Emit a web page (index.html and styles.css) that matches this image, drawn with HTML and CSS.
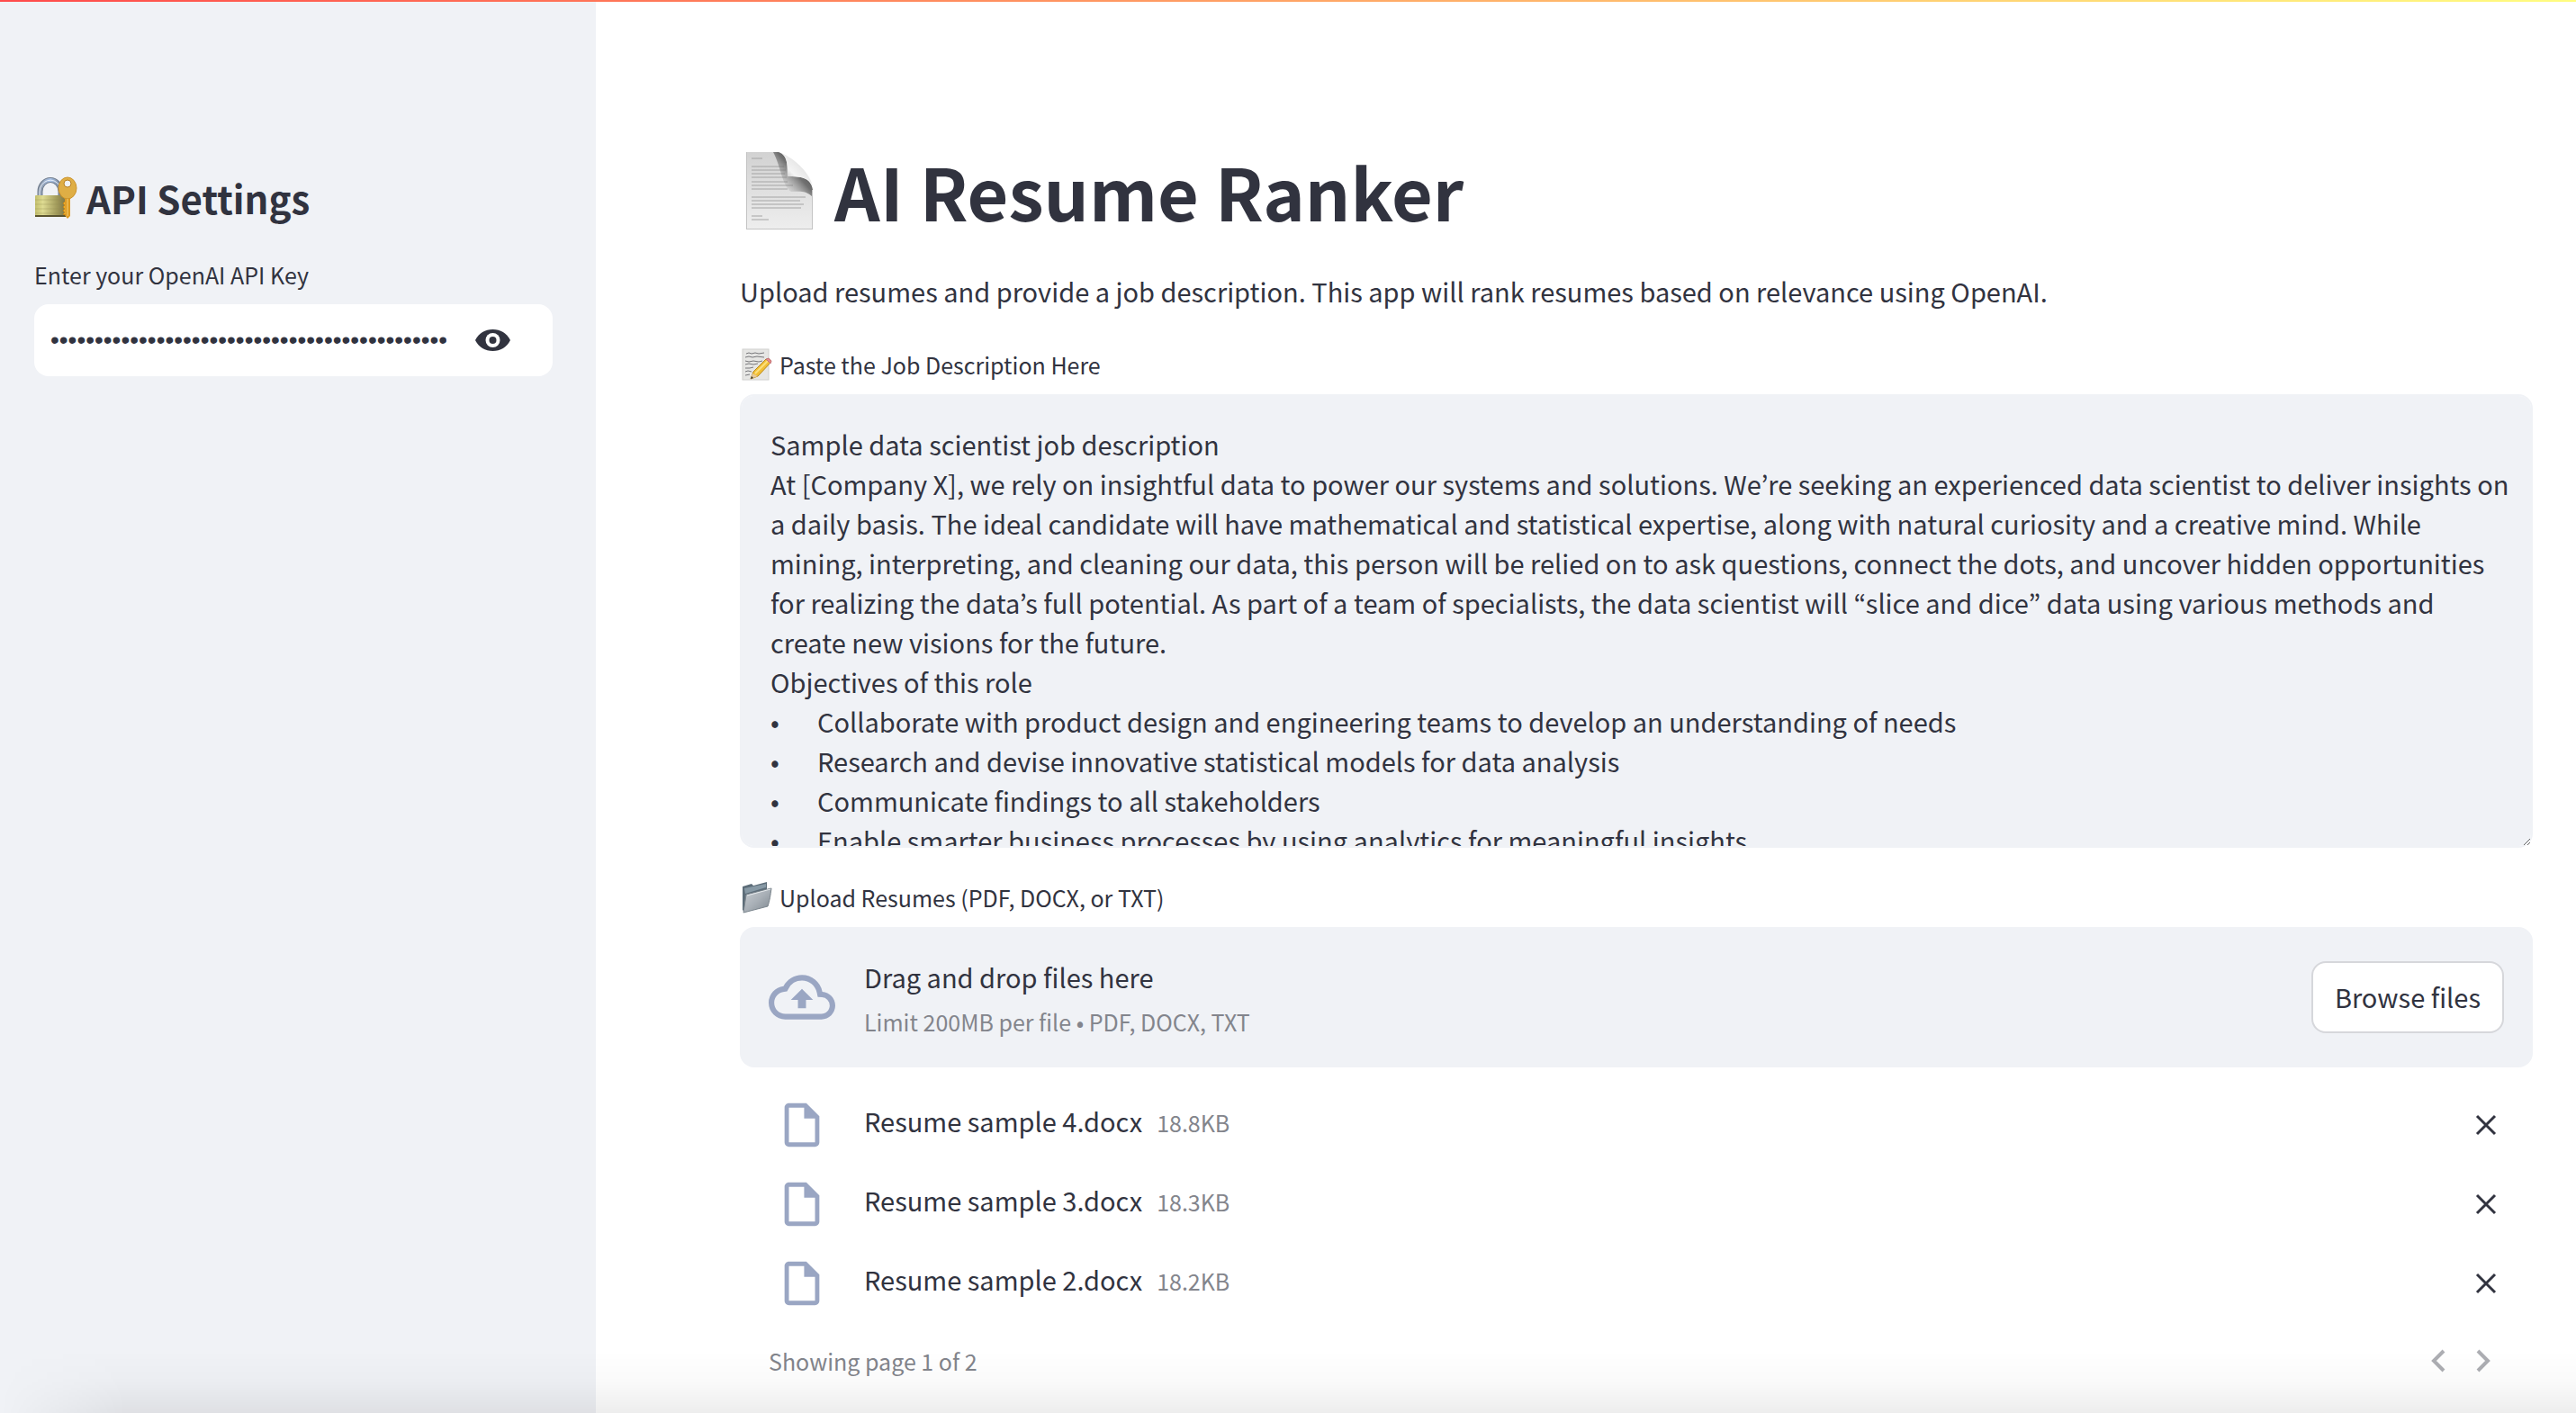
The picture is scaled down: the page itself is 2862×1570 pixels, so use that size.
FILE: index.html
```html
<!DOCTYPE html>
<html lang="en">
<head>
<meta charset="utf-8">
<title>AI Resume Ranker</title>
<meta name="viewport" content="width=device-width, initial-scale=1">
<link rel="stylesheet" href="styles.css">
</head>
<body>
<div class="decoration"></div>
<div class="app">
  <aside class="sidebar">
    <h2 class="sidebar-title">
      <svg class="icon-lock" viewBox="0 0 48 58" aria-hidden="true">
        <defs>
          <linearGradient id="brass" x1="0" x2="1" y1="0" y2="0"><stop offset="0" stop-color="#c3bf6c"/><stop offset=".25" stop-color="#dedb92"/><stop offset=".7" stop-color="#a39c5c"/><stop offset="1" stop-color="#7c7446"/></linearGradient>
          <linearGradient id="steel" x1="0" x2="1" y1="0" y2="0"><stop offset="0" stop-color="#8f9bab"/><stop offset=".5" stop-color="#a9c4ea"/><stop offset="1" stop-color="#76818f"/></linearGradient>
        </defs>
        <g transform="translate(0 5)">
        <path d="M6.500 24V17a11.500 13 0 0 1 23 0v7" fill="none" stroke="#6f7b8c" stroke-width="6"/>
        <path d="M6.500 24V17a11.500 13 0 0 1 23 0v7" fill="none" stroke="url(#steel)" stroke-width="4"/>
        <path d="M6 24V17a12 13 0 0 1 22-7" fill="none" stroke="#e6eefa" stroke-width="1"/>
        <rect x="1" y="21" width="34" height="24" rx="1" fill="url(#brass)"/>
        <path d="M1 26h34M1 31h34M1 36h34M1 41h34" stroke="#8f8950" stroke-opacity=".35"/>
        <path d="M1 44h34" stroke="#59532f" stroke-width="2"/>
        <path d="M34 23v20l3 4 3-3V23z" fill="#dd9b25"/>
        <path d="M34 28l-2 2 2 2-2 2 2 2-2 2 2 2-2 2 3 1" fill="#e8ad33" stroke="#c98718"/>
        <ellipse cx="37" cy="13" rx="10" ry="12" fill="#dfae45" stroke="#cc9229"/>
        <ellipse cx="37" cy="8" rx="4" ry="4" fill="#f0f2f6" stroke="#b97f1d"/>
        <path d="M37 25v19" stroke="#f6cf70"/>
        </g>
      </svg>
      <span>API Settings</span>
    </h2>
    <label class="label" for="api-key">Enter your OpenAI API Key</label>
    <div class="key-field">
      <input class="key-input" id="api-key" type="password" value="abcdefghijklmnopqrstuvwxyzabcdefghijklmnopqrstuvwxyz0123">
      <button class="plain-button eye" type="button" aria-label="Show password text">
        <svg class="icon-eye" viewBox="0 0 39 24" aria-hidden="true"><path d="M0 12C4 4 11 0 19.500 0S35 4 39 12C35 20 28 24 19.500 24S4 20 0 12z" fill="#31333f"/><circle cx="19.500" cy="12" r="8" fill="#fff"/><circle cx="19.500" cy="12" r="4" fill="#31333f"/></svg>
      </button>
    </div>
  </aside>

  <main class="main">
    <h1 class="title">
      <svg class="icon-page" viewBox="0 0 74 86" aria-hidden="true">
        <defs>
          <linearGradient id="sheet" x1="0" x2="0" y1="0" y2="1"><stop offset="0" stop-color="#d2d2d2"/><stop offset="1" stop-color="#eeeeee"/></linearGradient>
          <linearGradient id="curl" x1="0" y1="1" x2="1" y2="0"><stop offset="0" stop-color="#8a8a8a"/><stop offset=".4" stop-color="#f4f4f4"/><stop offset="1" stop-color="#cfcfcf"/></linearGradient>
          <linearGradient id="shade" x1="1" y1="0" x2="0" y2="1"><stop offset="0" stop-color="#333"/><stop offset=".45" stop-color="#555" stop-opacity=".8"/><stop offset=".8" stop-color="#999" stop-opacity="0"/></linearGradient>
        </defs>
        <path d="M0 0H36C46 3 46 14 46 27C60 27 72 28 74 42V86H0z" fill="url(#sheet)"/>
        <path d="M6 7h12M6 16h36M6 20h38M6 24h37M6 28h39M6 33h40M6 37h46M6 41h40M6 50h60M6 54h54M6 58h58M6 62h55M6 71h12M6 75h19" stroke="#a4a4a4"/>
        <path d="M30 0h6C46 3 46 14 46 27C60 27 72 28 74 42V50C66 42 58 44 50 44C40 38 38 14 30 0z" fill="url(#shade)"/>
        <path d="M36 0C46 3 46 14 46 27C60 27 70 28 74 38C71 22 50 4 36 0z" fill="url(#curl)"/>
        <path d="M0 85.500h74M.500 0v86M73.500 42v44" stroke="#c4c4c4" fill="none"/>
      </svg>
      <span>AI Resume Ranker</span>
    </h1>
    <p class="intro">Upload resumes and provide a job description. This app will rank resumes based on relevance using OpenAI.</p>

    <label class="label with-icon" for="job-description">
      <svg class="icon-small" viewBox="0 0 36 36" aria-hidden="true">
        <rect x="1" y="1" width="29" height="34" fill="#e6e6e4" stroke="#d0d0ce"/>
        <path d="M5 6l3-1 3 1 4-1 4 1 6-1M4 10l4-1 4 1 5-1 8 1M4 14l4 1 5-1 6 1 4-1M4 18l4-1 5 1 5-1M4 22h5l4-1M4 26l3-1 4 1M4 30l5-1" stroke="#77777a" fill="none"/>
        <path d="M13 26L27 12l5 4L18 31l-8 3z" fill="#f2bf35" stroke="#b98a1c"/>
        <path d="M15 28L29 14" stroke="#fbe07d" stroke-width="2"/>
        <path d="M27 12l3-1 3 3-1 3z" fill="#e58a8a" stroke="#c27676"/>
        <path d="M10 34l2-6 6 3z" fill="#e6c99a"/><path d="M10 34l1-3 2 2z" fill="#333"/>
      </svg>
      <span>Paste the Job Description Here</span>
    </label>
    <textarea class="job-text" id="job-description">Sample data scientist job description
At [Company X], we rely on insightful data to power our systems and solutions. We’re seeking an experienced data scientist to deliver insights on a daily basis. The ideal candidate will have mathematical and statistical expertise, along with natural curiosity and a creative mind. While mining, interpreting, and cleaning our data, this person will be relied on to ask questions, connect the dots, and uncover hidden opportunities for realizing the data’s full potential. As part of a team of specialists, the data scientist will “slice and dice” data using various methods and create new visions for the future.
Objectives of this role
•&#9;Collaborate with product design and engineering teams to develop an understanding of needs
•&#9;Research and devise innovative statistical models for data analysis
•&#9;Communicate findings to all stakeholders
•&#9;Enable smarter business processes by using analytics for meaningful insights</textarea>

    <div class="label with-icon" id="upload-label">
      <svg class="icon-small" viewBox="0 0 36 36" aria-hidden="true">
        <defs><linearGradient id="folder" x1="0" y1="0" x2="1" y2="1"><stop offset="0" stop-color="#c9ced3"/><stop offset=".5" stop-color="#a9b0b7"/><stop offset="1" stop-color="#7d868e"/></linearGradient></defs>
        <path d="M1 6l10-3 2 2 15-4v8L3 34 1 32z" fill="#5d6d79"/>
        <path d="M3 8l24-5v4L4 14z" fill="#8799a5"/>
        <path d="M5 15L33 8c-1 8-2 14-4 20L2 35z" fill="url(#folder)" stroke="#7b858d"/>
        <path d="M6 16l26-7" stroke="#e5e9ec"/>
      </svg>
      <span>Upload Resumes (PDF, DOCX, or TXT)</span>
    </div>
    <section class="dropzone" aria-labelledby="upload-label">
      <svg class="icon-cloud" viewBox="0 0 24 24" aria-hidden="true"><path fill="currentColor" d="M19.350 10.040A7.490 7.490 0 0 0 12 4C9.110 4 6.600 5.640 5.350 8.040A5.994 5.994 0 0 0 0 14c0 3.310 2.690 6 6 6h13c2.760 0 5-2.240 5-5 0-2.640-2.050-4.780-4.650-4.960zM19 18H6c-2.210 0-4-1.790-4-4 0-2.050 1.530-3.760 3.560-3.970l1.070-.11.5-.95A5.469 5.469 0 0 1 12 6c2.620 0 4.880 1.860 5.390 4.430l.3 1.500 1.530.11A2.980 2.980 0 0 1 22 15c0 1.650-1.350 3-3 3zM8 13h2.550v3h2.900v-3H16l-4-4z"/></svg>
      <div class="drop-text">
        <span class="drop-title">Drag and drop files here</span>
        <span class="small-text">Limit 200MB per file • PDF, DOCX, TXT</span>
      </div>
      <button class="browse" type="button">Browse files</button>
    </section>

    <ul class="files">
      <li class="file">
        <span class="file-icon"><svg class="icon-file" viewBox="0 0 24 24" aria-hidden="true"><path fill="currentColor" d="M14 2H6c-1.100 0-2 .9-2 2v16c0 1.100.9 2 2 2h12c1.100 0 2-.9 2-2V8l-6-6zM6 20V4h7v5h5v11H6z"/></svg></span>
        <span class="file-info"><span class="file-name">Resume sample 4.docx</span><span class="small-text">18.8KB</span></span>
        <button class="plain-button remove" type="button" aria-label="Remove Resume sample 4.docx"><svg class="icon-x" viewBox="0 0 24 24" aria-hidden="true"><path d="M2 2l20 20M22 2L2 22"/></svg></button>
      </li>
      <li class="file">
        <span class="file-icon"><svg class="icon-file" viewBox="0 0 24 24" aria-hidden="true"><path fill="currentColor" d="M14 2H6c-1.100 0-2 .9-2 2v16c0 1.100.9 2 2 2h12c1.100 0 2-.9 2-2V8l-6-6zM6 20V4h7v5h5v11H6z"/></svg></span>
        <span class="file-info"><span class="file-name">Resume sample 3.docx</span><span class="small-text">18.3KB</span></span>
        <button class="plain-button remove" type="button" aria-label="Remove Resume sample 3.docx"><svg class="icon-x" viewBox="0 0 24 24" aria-hidden="true"><path d="M2 2l20 20M22 2L2 22"/></svg></button>
      </li>
      <li class="file">
        <span class="file-icon"><svg class="icon-file" viewBox="0 0 24 24" aria-hidden="true"><path fill="currentColor" d="M14 2H6c-1.100 0-2 .9-2 2v16c0 1.100.9 2 2 2h12c1.100 0 2-.9 2-2V8l-6-6zM6 20V4h7v5h5v11H6z"/></svg></span>
        <span class="file-info"><span class="file-name">Resume sample 2.docx</span><span class="small-text">18.2KB</span></span>
        <button class="plain-button remove" type="button" aria-label="Remove Resume sample 2.docx"><svg class="icon-x" viewBox="0 0 24 24" aria-hidden="true"><path d="M2 2l20 20M22 2L2 22"/></svg></button>
      </li>
    </ul>
    <nav class="pager" aria-label="Uploaded files pages">
      <span class="small-text">Showing page 1 of 2</span>
      <span class="pager-buttons">
        <button class="plain-button" type="button" aria-label="Previous page"><svg class="icon-chevron" viewBox="0 0 16 26" aria-hidden="true"><path d="M14 2L3 13l11 11"/></svg></button>
        <button class="plain-button" type="button" aria-label="Next page"><svg class="icon-chevron" viewBox="0 0 16 26" aria-hidden="true"><path d="M2 2l11 11L2 24"/></svg></button>
      </span>
    </nav>
  </main>
</div>
<div class="bottom-shade"></div>
</body>
</html>
```
FILE: styles.css
```css
:root {
  --text: #31333f;
  --muted: #83858c;
  --panel: #f0f2f6;
  --icon: #9aa6c3;
}

* { box-sizing: border-box; }

body {
  margin: 0;
  background: #fff;
  color: var(--text);
  font-family: "Noto Sans CJK KR", "Noto Sans", sans-serif;
  font-size: 29px;
  line-height: 44px;
}

h1, h2, p, ul { margin: 0; padding: 0; }
svg { display: block; flex: none; }

input, textarea, button {
  font: inherit;
  color: inherit;
}

.decoration {
  position: fixed;
  inset: 0 0 auto 0;
  height: 2px;
  background: linear-gradient(90deg, #ff4b4b, #fffd80);
}

.app {
  display: flex;
  min-height: 100vh;
}

.sidebar {
  flex: none;
  width: 662px;
  padding: 190px 48px 0 38px;
  background: var(--panel);
}

.sidebar-title {
  display: flex;
  align-items: center;
  gap: 10px;
  margin-bottom: 37px;
  font-size: 42px;
  font-weight: 700;
  line-height: 60px;
}

.label {
  display: block;
  margin-bottom: 15px;
  font-size: 25px;
  line-height: 36px;
}

.with-icon {
  display: flex;
  align-items: center;
  gap: 6px;
  padding-left: 2px;
}

.key-field {
  display: flex;
  align-items: center;
  height: 80px;
  border-radius: 16px;
  background: #fff;
}

.key-input {
  flex: 1;
  min-width: 0;
  margin-left: 18px;
  padding: 0;
  border: 0;
  outline: 0;
  background: none;
  font-family: "Liberation Sans", sans-serif;
  font-size: 28px;
}

.plain-button {
  display: flex;
  padding: 0;
  border: 0;
  background: none;
}

.eye { margin: 0 47px 0 32px; }

.main {
  flex: 1;
  min-width: 0;
  padding: 164px 48px 40px 160px;
}

.title {
  display: flex;
  align-items: center;
  gap: 24px;
  margin-bottom: 39px;
  padding-left: 7px;
  font-size: 79px;
  font-weight: 700;
  line-height: 96px;
}

.intro {
  margin-bottom: 40px;
  line-height: 48px;
}

.job-text {
  display: block;
  width: 100%;
  height: 504px;
  margin-bottom: 37px;
  padding: 31px 22px 31px 32px;
  border: 2px solid var(--panel);
  border-radius: 16px;
  outline: 0;
  background: var(--panel);
  resize: vertical;
  scrollbar-width: none;
}

.dropzone {
  display: flex;
  align-items: center;
  gap: 32px;
  min-height: 156px;
  padding: 32px;
  border-radius: 16px;
  background: var(--panel);
}

.drop-text {
  display: flex;
  flex: 1;
  flex-direction: column;
  gap: 10px;
}

.small-text {
  color: var(--muted);
  font-size: 25px;
  line-height: 36px;
}

.browse {
  height: 80px;
  padding: 0 24px 2px;
  border: 2px solid #d6d7db;
  border-radius: 16px;
  background: #fff;
}

.files {
  margin: 20px 32px 0;
  list-style: none;
}

.file {
  display: flex;
  align-items: center;
  gap: 32px;
  height: 88px;
}

.file-icon {
  display: flex;
  justify-content: center;
  width: 74px;
}

.file-info {
  display: flex;
  flex: 1;
  align-items: baseline;
  gap: 16px;
  padding-bottom: 10px;
}

.remove { margin-right: 8px; }

.pager {
  display: flex;
  align-items: center;
  justify-content: space-between;
  margin: 24px 47px 0 32px;
}

.pager-buttons {
  display: flex;
  gap: 34px;
}

.icon-lock { width: 48px; height: 58px; }
.icon-eye { width: 39px; height: 24px; }
.icon-page { width: 74px; height: 86px; }
.icon-small { width: 36px; height: 36px; }
.icon-cloud { width: 74px; height: 74px; color: var(--icon); }
.icon-file { width: 58px; height: 58px; color: var(--icon); }
.icon-x { width: 24px; height: 24px; fill: none; stroke: var(--text); stroke-width: 3; }
.icon-chevron { width: 16px; height: 26px; fill: none; stroke: #adaeb3; stroke-width: 4; }

.bottom-shade {
  position: fixed;
  inset: auto 0 0 0;
  height: 70px;
  background: linear-gradient(transparent, rgb(0 0 0 / 2%) 50%, rgb(0 0 0 / 7%));
  mask-image: linear-gradient(90deg, transparent, #000 140px);
  pointer-events: none;
}
```
